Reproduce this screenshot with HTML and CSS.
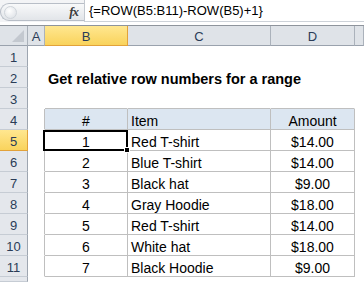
FILE: index.html
```html
<!DOCTYPE html>
<html lang="en">
<head>
    <meta charset="UTF-8">
    <title>Relative row numbers</title>
    <link rel="stylesheet" href="styles.css">
</head>
<body>

    <div class="fbar">
        <div class="namebox">
            <span class="grip"></span>
            <span class="fx">fx</span>
        </div>
        <div class="formula">{=ROW(B5:B11)-ROW(B5)+1}</div>
    </div>

    <div class="sheet">
        <div class="corner"><span class="tri"></span></div>
        <div class="ch">A</div>
        <div class="ch ch-sel">B</div>
        <div class="ch">C</div>
        <div class="ch">D</div>
        <div class="ch"></div>

        <!-- row 1 -->
        <div class="rh">1</div>
        <div class="c"></div><div class="c"></div><div class="c"></div><div class="c"></div><div class="c"></div>

        <!-- row 2 -->
        <div class="rh">2</div>
        <div class="c"></div>
        <div class="c title">Get relative row numbers for a range</div>
        <div class="c"></div><div class="c"></div><div class="c"></div>

        <!-- row 3 -->
        <div class="rh">3</div>
        <div class="c"></div>
        <div class="c tt"></div><div class="c tt"></div><div class="c tt"></div>
        <div class="c"></div>

        <!-- row 4 -->
        <div class="rh">4</div>
        <div class="c tl"></div>
        <div class="c t th ctr">#</div>
        <div class="c t th">Item</div>
        <div class="c t th ctr">Amount</div>
        <div class="c"></div>

        <!-- row 5 -->
        <div class="rh rh-sel">5</div>
        <div class="c tl"></div>
        <div class="c t ctr active">1<span class="selbox"></span><span class="handle"></span></div>
        <div class="c t">Red T-shirt</div>
        <div class="c t ctr">$14.00</div>
        <div class="c"></div>

        <!-- row 6 -->
        <div class="rh">6</div>
        <div class="c tl"></div>
        <div class="c t ctr">2</div>
        <div class="c t">Blue T-shirt</div>
        <div class="c t ctr">$14.00</div>
        <div class="c"></div>

        <!-- row 7 -->
        <div class="rh">7</div>
        <div class="c tl"></div>
        <div class="c t ctr">3</div>
        <div class="c t">Black hat</div>
        <div class="c t ctr">$9.00</div>
        <div class="c"></div>

        <!-- row 8 -->
        <div class="rh">8</div>
        <div class="c tl"></div>
        <div class="c t ctr">4</div>
        <div class="c t">Gray Hoodie</div>
        <div class="c t ctr">$18.00</div>
        <div class="c"></div>

        <!-- row 9 -->
        <div class="rh">9</div>
        <div class="c tl"></div>
        <div class="c t ctr">5</div>
        <div class="c t">Red T-shirt</div>
        <div class="c t ctr">$14.00</div>
        <div class="c"></div>

        <!-- row 10 -->
        <div class="rh">10</div>
        <div class="c tl"></div>
        <div class="c t ctr">6</div>
        <div class="c t">White hat</div>
        <div class="c t ctr">$18.00</div>
        <div class="c"></div>

        <!-- row 11 -->
        <div class="rh">11</div>
        <div class="c tl"></div>
        <div class="c t ctr">7</div>
        <div class="c t">Black Hoodie</div>
        <div class="c t ctr">$9.00</div>
        <div class="c"></div>

        <!-- row 12 (cut off) -->
        <div class="rh"></div>
        <div class="c"></div><div class="c"></div><div class="c"></div><div class="c"></div><div class="c"></div>
    </div>

</body>
</html>
```

FILE: styles.css
```css
body {
    margin: 0;
    background-color: #ffffff;
    font-family: 'Liberation Sans', Arial, sans-serif;
    width: 364px;
    height: 282px;
    overflow: hidden;
}

/* formula bar */
.fbar {
    display: flex;
    height: 22px;
    background-color: #f3f4f6;
    border-bottom: 3px solid #ffffff;
}

.namebox {
    flex: 0 0 84px;
    box-sizing: border-box;
    height: 18px;
    margin-top: 3px;
    border: 1px solid #b8bec7;
    border-right: none;
    border-radius: 9px 0 0 9px;
    background: linear-gradient(#f8f9fa, #e2e5e9);
    display: flex;
    align-items: center;
    justify-content: space-between;
    padding: 0 6px 0 3px;
}

.grip {
    width: 11px;
    height: 11px;
    border-radius: 50%;
    background: radial-gradient(circle at 40% 35%, #ffffff, #d9dde3);
    border: 1px solid #cfd4da;
}

.fx {
    font-family: 'Liberation Serif', serif;
    font-style: italic;
    font-weight: bold;
    font-size: 13px;
    color: #3c3c3c;
    letter-spacing: -1px;
}

.formula {
    flex: 1;
    background-color: #ffffff;
    border-left: 1px solid #c3c8cf;
    border-bottom: 1px solid #cdd2d8;
    padding-left: 4px;
    font-size: 13px;
    line-height: 22px;
    color: #000000;
}

/* sheet grid */
.sheet {
    display: grid;
    grid-template-columns: 28px 17px 83px 143px 84px 1fr;
    grid-template-rows: 20px repeat(11, 21px) 5px;
    border-top: 1px solid #8e949c;
}

.sheet > div {
    box-sizing: border-box;
    display: flex;
    align-items: flex-end;
    line-height: 16px;
    white-space: nowrap;
}

.corner {
    background-color: #dfe3e8;
    border-right: 1px solid #a9b0b9;
    border-bottom: 1px solid #9aa2ad;
    position: relative;
}

.tri {
    position: absolute;
    right: 3px;
    bottom: 3px;
    width: 0;
    height: 0;
    border-left: 12px solid transparent;
    border-bottom: 12px solid #c3c8cf;
}

.ch {
    background-color: #dfe3e8;
    border-right: 1px solid #abb2bb;
    border-bottom: 1px solid #9aa2ad;
    justify-content: center;
    font-size: 13px;
    color: #2a3c57;
}

.ch-sel {
    background: linear-gradient(#ffe790, #f9d35c);
    border-right-color: #e2a23a;
    border-bottom-color: #e2a23a;
}

.rh {
    background-color: #e4e7ec;
    border-right: 1px solid #9da5b0;
    border-bottom: 1px solid #c6ccd4;
    justify-content: center;
    font-size: 13px;
    color: #2a3c57;
}

.rh-sel {
    background: linear-gradient(#ffe790, #f9d35c);
    border-bottom-color: #e2a23a;
    border-right-color: #e2a23a;
}

/* cells */
.c {
    border-right: 1px solid transparent;
    border-bottom: 1px solid transparent;
    padding: 0 3px;
    font-size: 14px;
    color: #000000;
}

.ctr {
    justify-content: center;
}

.title {
    font-weight: bold;
    font-size: 14.5px;
    overflow: visible;
}

.t {
    border-right-color: #bfbfbf;
    border-bottom-color: #bfbfbf;
}

.tl {
    border-right-color: #bfbfbf;
}

.tt {
    border-bottom-color: #bfbfbf;
}

.th {
    background-color: #dce6f1;
}

.active {
    position: relative;
}

.selbox {
    position: absolute;
    top: 0;
    left: -2px;
    right: -1px;
    bottom: -1px;
    border: 2px solid #000000;
}

.handle {
    position: absolute;
    right: -3px;
    bottom: -3px;
    width: 6px;
    height: 6px;
    box-sizing: border-box;
    background-color: #000000;
    border: 1px solid #ffffff;
}
```
